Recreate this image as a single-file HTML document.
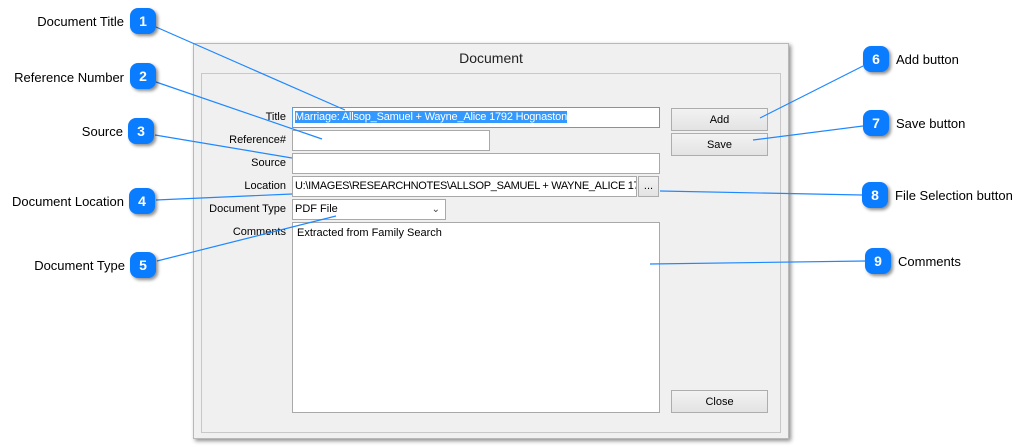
<!DOCTYPE html>
<html><head><style>
body{margin:0;width:1030px;height:447px;background:#fff;position:relative;overflow:hidden;font-family:"Liberation Sans",Arial,sans-serif}
.a{position:absolute}
.lbl{position:absolute;font-size:13px;color:#000;white-space:nowrap}
.b{position:absolute;width:26px;height:26px;border-radius:8px;background:#0a7cff;color:#fff;font-weight:bold;font-size:14px;text-align:center;line-height:26px;box-shadow:2px 2px 3px rgba(0,0,0,.45)}
.win{left:193px;top:43px;width:594px;height:394px;background:#f0f0f0;border:1px solid #b8b8b8;box-shadow:2px 2px 4px rgba(0,0,0,.45)}
.panel{left:201px;top:73px;width:578px;height:358px;border:1px solid #c8c8c8;background:#f0f0f0}
.f{position:absolute;background:#fff;border:1px solid #a9a9a9;box-sizing:border-box;font-size:11px;line-height:19px;padding-left:2px;white-space:nowrap;overflow:hidden}
.fl{position:absolute;font-size:11px;text-align:right;width:100px;color:#000}
.btn{position:absolute;border:1px solid #adadad;background:linear-gradient(#f2f2f2,#e3e3e3);box-sizing:border-box;font-size:11px;text-align:center;line-height:22px}
</style></head><body>
<div class="a win"></div>
<div class="a" style="left:193px;top:50px;width:596px;text-align:center;font-size:14px;color:#222">Document</div>
<div class="a panel"></div>

<div class="fl" style="left:186px;top:111px">Title</div>
<div class="fl" style="left:186px;top:134px">Reference#</div>
<div class="fl" style="left:186px;top:157px">Source</div>
<div class="fl" style="left:186px;top:180px">Location</div>
<div class="fl" style="left:186px;top:203px">Document Type</div>
<div class="fl" style="left:186px;top:226px">Comments</div>

<div class="f" style="left:292px;top:107px;width:368px;height:21px;border-color:#569de5"><span style="background:#3399ff;color:#fff;letter-spacing:-0.2px">Marriage: Allsop_Samuel + Wayne_Alice 1792 Hognaston</span></div>
<div class="f" style="left:292px;top:130px;width:198px;height:21px"></div>
<div class="f" style="left:292px;top:153px;width:368px;height:21px"></div>
<div class="f" style="left:292px;top:176px;width:345px;height:21px;letter-spacing:-0.3px">U:\IMAGES\RESEARCHNOTES\ALLSOP_SAMUEL + WAYNE_ALICE 1792 HOGNASTON.PDF</div>
<div class="btn" style="left:638px;top:176px;width:21px;height:21px;line-height:18px">...</div>
<div class="f" style="left:292px;top:199px;width:154px;height:21px">PDF File<span style="position:absolute;right:5px;top:0;font-size:10px;color:#444">&#8964;</span></div>
<div class="f" style="left:292px;top:222px;width:368px;height:191px;line-height:20px;padding-left:4px">Extracted from Family Search</div>

<div class="btn" style="left:671px;top:108px;width:97px;height:23px">Add</div>
<div class="btn" style="left:671px;top:133px;width:97px;height:23px">Save</div>
<div class="btn" style="left:671px;top:390px;width:97px;height:23px">Close</div>

<svg class="a" style="left:0;top:0" width="1030" height="447">
<g stroke="#1e88ff" stroke-width="1.2" fill="none">
<line x1="156" y1="27" x2="345" y2="110"/>
<line x1="156" y1="82" x2="322" y2="139"/>
<line x1="155" y1="135" x2="292" y2="158"/>
<line x1="156" y1="200" x2="292" y2="194"/>
<line x1="157" y1="261" x2="336" y2="216"/>
<line x1="863" y1="66" x2="760" y2="118"/>
<line x1="863" y1="126" x2="753" y2="140"/>
<line x1="862" y1="195" x2="660" y2="191"/>
<line x1="865" y1="261" x2="650" y2="264"/>
</g></svg>

<div class="b" style="left:130px;top:8px">1</div>
<div class="b" style="left:130px;top:63px">2</div>
<div class="b" style="left:128px;top:118px">3</div>
<div class="b" style="left:129px;top:188px">4</div>
<div class="b" style="left:130px;top:252px">5</div>
<div class="b" style="left:863px;top:46px">6</div>
<div class="b" style="left:863px;top:110px">7</div>
<div class="b" style="left:862px;top:182px">8</div>
<div class="b" style="left:865px;top:248px">9</div>

<div class="lbl" style="right:906px;top:14px">Document Title</div>
<div class="lbl" style="right:906px;top:70px">Reference Number</div>
<div class="lbl" style="right:907px;top:124px">Source</div>
<div class="lbl" style="right:906px;top:194px">Document Location</div>
<div class="lbl" style="right:905px;top:258px">Document Type</div>
<div class="lbl" style="left:896px;top:52px">Add button</div>
<div class="lbl" style="left:896px;top:116px">Save button</div>
<div class="lbl" style="left:895px;top:188px">File Selection button</div>
<div class="lbl" style="left:898px;top:254px">Comments</div>
</body></html>
